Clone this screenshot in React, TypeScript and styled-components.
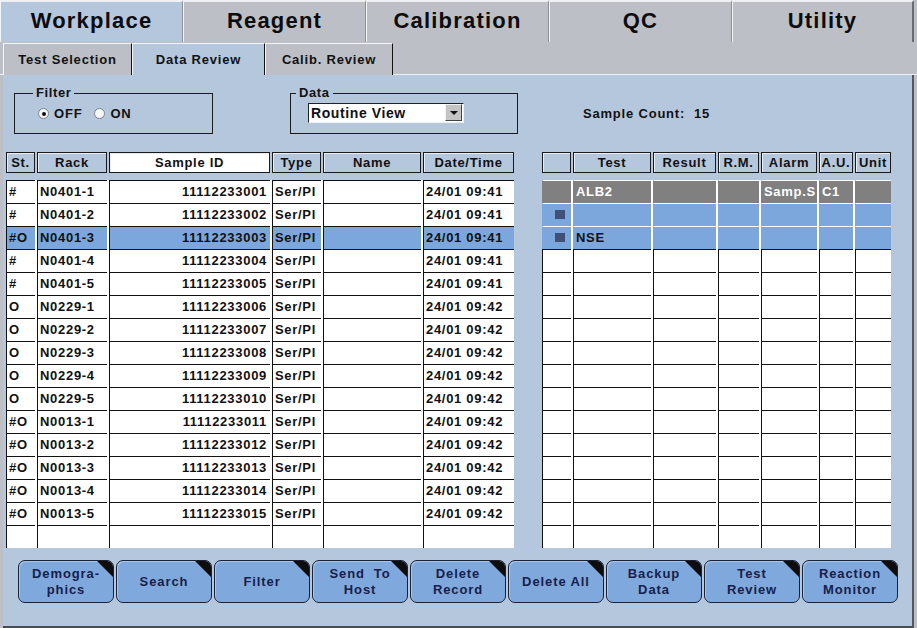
import React from "react";
import styled, { createGlobalStyle } from "styled-components";

const GlobalStyle = createGlobalStyle`
  html, body {
    margin: 0;
    padding: 0;
    background: #bcbfc5;
  }
  * {
    box-sizing: border-box;
  }
`;

const PANEL = "#b5c7dd";
const SELECTED = "#7ba7dc";

const Screen = styled.div`
  width: 917px;
  height: 628px;
  background: #bcbfc5;
  font-family: "Liberation Sans", Arial, sans-serif;
  font-weight: bold;
  color: #111;
  display: flex;
  flex-direction: column;
  overflow: hidden;
`;

const MainTabs = styled.div`
  display: flex;
  height: 42px;
`;

const MainTab = styled.div<{ $active?: boolean }>`
  width: 183px;
  height: 42px;
  display: flex;
  align-items: center;
  justify-content: center;
  font-size: 22px;
  letter-spacing: 1.2px;
  background: ${(p) => (p.$active ? PANEL : "#bcbfc5")};
  border-top: 2px solid #eef0f3;
  border-left: 1px solid #f4f5f7;
  border-right: 1px solid #8d9096;
  color: #0c0c0c;
  padding-bottom: 2px;

  &:last-child {
    width: 182px;
    border-right: 2px solid #6b6d72;
  }
`;

const SubTabs = styled.div`
  display: flex;
  height: 33px;
  padding-left: 3px;
  border-bottom: 1px solid #eef0f3;
`;

const SubTab = styled.div<{ $active?: boolean; $w: number }>`
  width: ${(p) => p.$w}px;
  height: 32px;
  display: flex;
  align-items: center;
  justify-content: center;
  font-size: 13px;
  letter-spacing: 0.8px;
  background: ${(p) => (p.$active ? PANEL : "#bcbfc5")};
  border-top: 1px solid #f4f5f7;
  border-left: 1px solid #f4f5f7;
  border-right: 1px solid #111;
  margin-top: 1px;
`;

const Panel = styled.div`
  flex: 1;
  margin-left: 3px;
  width: 911px;
  background: ${PANEL};
  border-right: 2px solid #55575c;
  border-bottom: 2px solid #4a4c50;
  display: flex;
  flex-direction: column;
`;

const ControlsRow = styled.div`
  height: 77px;
  display: flex;
  align-items: flex-start;
  padding: 18px 0 0 11px;
`;

const GroupBox = styled.div<{ $w: number; $gap: number }>`
  position: relative;
  width: ${(p) => p.$w}px;
  height: 41px;
  border: 1px solid #1c1c1c;
  margin-right: ${(p) => p.$gap}px;
  display: flex;
  align-items: center;
`;

const Legend = styled.span<{ $left: number }>`
  position: absolute;
  top: -9px;
  left: ${(p) => p.$left}px;
  padding: 0 3px;
  background: ${PANEL};
  font-size: 13px;
  letter-spacing: 0.6px;
  line-height: 15px;
`;

const Radios = styled.div`
  display: flex;
  gap: 12px;
  padding-left: 23px;
  font-size: 13px;
  letter-spacing: 0.8px;
`;

const RadioItem = styled.label`
  display: flex;
  align-items: center;
  gap: 5px;
`;

const RadioDot = styled.span<{ $on?: boolean }>`
  width: 11px;
  height: 11px;
  border-radius: 50%;
  background: #f7f8fa;
  border: 1px solid #7c8088;
  display: flex;
  align-items: center;
  justify-content: center;

  &::after {
    content: "";
    width: 4px;
    height: 4px;
    border-radius: 50%;
    background: ${(p) => (p.$on ? "#111" : "transparent")};
  }
`;

const Select = styled.div`
  margin-left: 17px;
  margin-top: -2px;
  width: 156px;
  height: 20px;
  background: #fff;
  border-top: 1px solid #222;
  border-left: 1px solid #222;
  border-right: 1px solid #f0f0f0;
  border-bottom: 1px solid #f0f0f0;
  display: flex;
  align-items: center;
  justify-content: space-between;
  font-size: 14px;
  letter-spacing: 0.6px;
  padding-left: 2px;
`;

const SelectArrow = styled.span`
  width: 17px;
  height: 17px;
  margin-right: 1px;
  background: #c4c4c4;
  border-top: 1px solid #f2f2f2;
  border-left: 1px solid #f2f2f2;
  border-right: 1px solid #444;
  border-bottom: 1px solid #444;
  display: flex;
  align-items: center;
  justify-content: center;

  &::after {
    content: "";
    border-left: 4px solid transparent;
    border-right: 4px solid transparent;
    border-top: 4px solid #111;
  }
`;

const SampleCount = styled.div`
  padding-top: 13px;
  font-size: 13px;
  letter-spacing: 0.8px;
  white-space: pre;
`;

const TablesRow = styled.div`
  display: flex;
  gap: 28px;
  padding-left: 3px;
`;

const Table = styled.div<{ $w: number }>`
  width: ${(p) => p.$w}px;
  display: flex;
  flex-direction: column;
`;

const HeaderRow = styled.div<{ $cols: string }>`
  display: grid;
  grid-template-columns: ${(p) => p.$cols};
  column-gap: 2px;
  height: 21px;
  margin-bottom: 7px;
`;

const HeaderCell = styled.div<{ $white?: boolean }>`
  border: 1px solid #1a1a1a;
  box-shadow: inset 1px 1px 0 #e9eef5;
  background: ${(p) => (p.$white ? "#fff" : PANEL)};
  display: flex;
  align-items: center;
  justify-content: center;
  font-size: 13px;
  letter-spacing: 0.7px;
  white-space: nowrap;
  overflow: hidden;
`;

const Body = styled.div`
  background: #fff;
  display: flex;
  flex-direction: column;
`;

const BodyRow = styled.div<{ $cols: string }>`
  display: grid;
  grid-template-columns: ${(p) => p.$cols};
  column-gap: 2px;
  height: 23px;
`;

type Tone = "plain" | "selected" | "grey" | "blue";

const Cell = styled.div<{ $tone: Tone; $right?: boolean }>`
  border-top: 1px solid ${(p) => (p.$tone === "grey" || p.$tone === "blue" ? "#fff" : "#111")};
  border-left: 1px solid ${(p) => (p.$tone === "grey" || p.$tone === "blue" ? "transparent" : "#111")};
  background: ${(p) =>
    p.$tone === "selected" || p.$tone === "blue" ? SELECTED : p.$tone === "grey" ? "#808080" : "#fff"};
  color: ${(p) => (p.$tone === "grey" ? "#fff" : "#111")};
  display: flex;
  align-items: center;
  justify-content: ${(p) => (p.$right ? "flex-end" : "flex-start")};
  padding: 0 3px 1px 2px;
  font-size: 13px;
  letter-spacing: 0.7px;
  white-space: nowrap;
  overflow: hidden;
`;

const Marker = styled.span`
  width: 10px;
  height: 9px;
  margin-left: auto;
  margin-right: 3px;
  background: #3f5178;
`;

const ButtonBar = styled.div`
  display: flex;
  gap: 2px;
  padding: 12px 0 0 15px;
`;

const ActionButton = styled.button`
  position: relative;
  width: 96px;
  height: 43px;
  border: 1px solid #1b2035;
  border-radius: 7px;
  background: #7fa9dd;
  box-shadow: inset 1px 1px 0 #a9c6ea;
  overflow: hidden;
  font-family: "Liberation Sans", Arial, sans-serif;
  font-weight: bold;
  font-size: 13px;
  letter-spacing: 0.9px;
  line-height: 16px;
  color: #17204a;
  padding: 0 4px;
  cursor: pointer;

  &::after {
    content: "";
    position: absolute;
    top: 0;
    right: 0;
    width: 16px;
    height: 16px;
    background: #0d0d0d;
    clip-path: polygon(0 0, 100% 0, 100% 100%);
  }
`;

const ButtonLine = styled.div`
  white-space: pre;
`;

const leftCols = "29px 70px 161px 49px 98px 91px";
const rightCols = "29px 78px 63px 41px 56px 34px 36px";

const samples: [string, string, string][] = [
  ["#", "N0401-1", "24/01 09:41"],
  ["#", "N0401-2", "24/01 09:41"],
  ["#O", "N0401-3", "24/01 09:41"],
  ["#", "N0401-4", "24/01 09:41"],
  ["#", "N0401-5", "24/01 09:41"],
  ["O", "N0229-1", "24/01 09:42"],
  ["O", "N0229-2", "24/01 09:42"],
  ["O", "N0229-3", "24/01 09:42"],
  ["O", "N0229-4", "24/01 09:42"],
  ["O", "N0229-5", "24/01 09:42"],
  ["#O", "N0013-1", "24/01 09:42"],
  ["#O", "N0013-2", "24/01 09:42"],
  ["#O", "N0013-3", "24/01 09:42"],
  ["#O", "N0013-4", "24/01 09:42"],
  ["#O", "N0013-5", "24/01 09:42"],
];

const tests: { tone: Tone; cells: string[]; marker?: boolean }[] = [
  { tone: "grey", cells: ["", "ALB2", "", "", "Samp.S", "C1", ""] },
  { tone: "blue", cells: ["", "", "", "", "", "", ""], marker: true },
  { tone: "blue", cells: ["", "NSE", "", "", "", "", ""], marker: true },
];

const buttons = [
  ["Demogra-", "phics"],
  ["Search"],
  ["Filter"],
  ["Send  To", "Host"],
  ["Delete", "Record"],
  ["Delete All"],
  ["Backup", "Data"],
  ["Test", "Review"],
  ["Reaction", "Monitor"],
];

export default function App() {
  const leftRows = [...samples.map((s, i) => ({ s, i })), null];
  const rightRows = [...tests];
  while (rightRows.length < 16) rightRows.push({ tone: "plain", cells: ["", "", "", "", "", "", ""] });

  return (
    <>
      <GlobalStyle />
      <Screen>
        <MainTabs>
          <MainTab $active>Workplace</MainTab>
          <MainTab>Reagent</MainTab>
          <MainTab>Calibration</MainTab>
          <MainTab>QC</MainTab>
          <MainTab>Utility</MainTab>
        </MainTabs>
        <SubTabs>
          <SubTab $w={129}>Test Selection</SubTab>
          <SubTab $w={133} $active>
            Data Review
          </SubTab>
          <SubTab $w={128}>Calib. Review</SubTab>
        </SubTabs>
        <Panel>
          <ControlsRow>
            <GroupBox $w={199} $gap={77}>
              <Legend $left={18}>Filter</Legend>
              <Radios>
                <RadioItem>
                  <RadioDot $on />
                  OFF
                </RadioItem>
                <RadioItem>
                  <RadioDot />
                  ON
                </RadioItem>
              </Radios>
            </GroupBox>
            <GroupBox $w={228} $gap={65}>
              <Legend $left={5}>Data</Legend>
              <Select>
                Routine View
                <SelectArrow />
              </Select>
            </GroupBox>
            <SampleCount>Sample Count:  15</SampleCount>
          </ControlsRow>

          <TablesRow>
            <Table $w={508}>
              <HeaderRow $cols={leftCols}>
                <HeaderCell>St.</HeaderCell>
                <HeaderCell>Rack</HeaderCell>
                <HeaderCell $white>Sample ID</HeaderCell>
                <HeaderCell>Type</HeaderCell>
                <HeaderCell>Name</HeaderCell>
                <HeaderCell>Date/Time</HeaderCell>
              </HeaderRow>
              <Body>
                {leftRows.map((row, idx) => {
                  const tone: Tone = row && row.i === 2 ? "selected" : "plain";
                  return (
                    <BodyRow key={idx} $cols={leftCols}>
                      <Cell $tone={tone}>{row ? row.s[0] : ""}</Cell>
                      <Cell $tone={tone}>{row ? row.s[1] : ""}</Cell>
                      <Cell $tone={tone} $right>
                        {row ? String(11112233001 + row.i) : ""}
                      </Cell>
                      <Cell $tone={tone}>{row ? "Ser/Pl" : ""}</Cell>
                      <Cell $tone={tone} />
                      <Cell $tone={tone}>{row ? row.s[2] : ""}</Cell>
                    </BodyRow>
                  );
                })}
              </Body>
            </Table>

            <Table $w={349}>
              <HeaderRow $cols={rightCols}>
                <HeaderCell />
                <HeaderCell>Test</HeaderCell>
                <HeaderCell>Result</HeaderCell>
                <HeaderCell>R.M.</HeaderCell>
                <HeaderCell>Alarm</HeaderCell>
                <HeaderCell>A.U.</HeaderCell>
                <HeaderCell>Unit</HeaderCell>
              </HeaderRow>
              <Body>
                {rightRows.map((row, idx) => (
                  <BodyRow key={idx} $cols={rightCols}>
                    {row.cells.map((c, ci) => (
                      <Cell key={ci} $tone={row.tone}>
                        {ci === 0 && row.marker ? <Marker /> : c}
                      </Cell>
                    ))}
                  </BodyRow>
                ))}
              </Body>
            </Table>
          </TablesRow>

          <ButtonBar>
            {buttons.map((lines, i) => (
              <ActionButton key={i}>
                {lines.map((l, li) => (
                  <ButtonLine key={li}>{l}</ButtonLine>
                ))}
              </ActionButton>
            ))}
          </ButtonBar>
        </Panel>
      </Screen>
    </>
  );
}
